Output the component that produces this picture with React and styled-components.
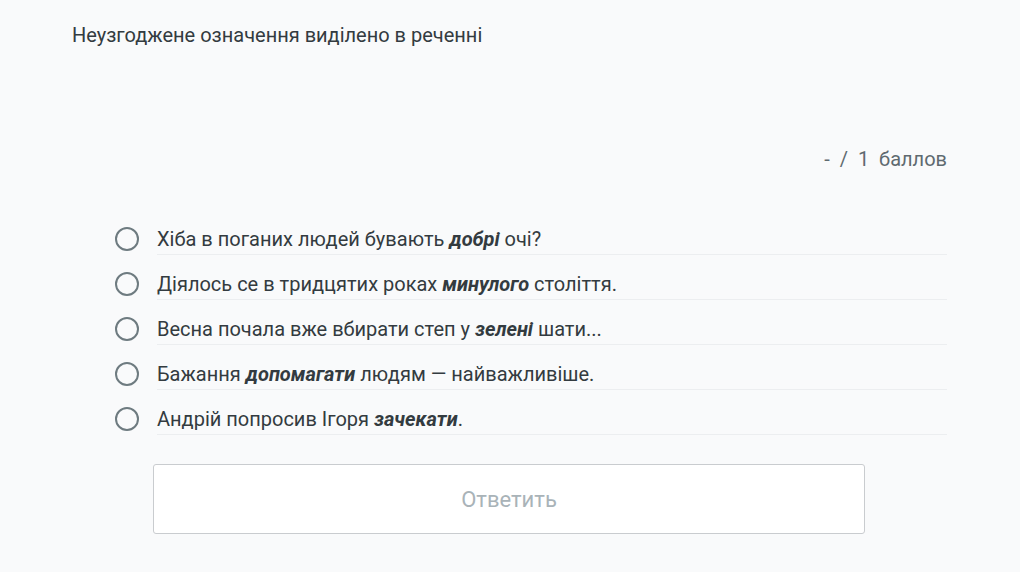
import styled, { createGlobalStyle } from "styled-components";

const Global = createGlobalStyle`
  body {
    margin: 0;
    background: #f9fafb;
    font-family: Roboto, "Noto Sans", sans-serif;
    color: #333b40;
  }
`;

const Page = styled.div`
  width: 1020px;
  height: 572px;
  padding: 23px 73px 0 72px;
  box-sizing: border-box;
`;

const Title = styled.div`
  font-size: 20px;
  line-height: 24px;
`;

const Score = styled.div`
  margin-top: 100px;
  text-align: right;
  font-size: 20px;
  line-height: 24px;
  color: #5f6a70;
  word-spacing: 5px;
`;

const Options = styled.div`
  margin-top: 39px;
  margin-left: 43px;
  display: flex;
  flex-direction: column;
`;

const Row = styled.label`
  display: flex;
  align-items: flex-start;
  height: 45px;
`;

const Radio = styled.span`
  width: 20px;
  height: 20px;
  border: 2px solid #6e7b80;
  border-radius: 50%;
  flex: none;
  margin: 17px 18px 0 0;
`;

const Text = styled.div`
  flex: 1;
  font-size: 20px;
  line-height: 24px;
  padding: 17px 0 3px;
  border-bottom: 1px solid #eceef0;
  b {
    font-weight: 700;
    font-style: italic;
  }
`;

const Button = styled.button`
  display: block;
  margin: 29px 0 0 81px;
  width: 712px;
  height: 70px;
  background: #fff;
  border: 1px solid #c9cccf;
  border-radius: 3px;
  font-family: Roboto, sans-serif;
  font-size: 22px;
  color: #a9b3b8;
`;

const options = [
  <>Хіба в поганих людей бувають <b>добрі</b> очі?</>,
  <>Діялось се в тридцятих роках <b>минулого</b> століття.</>,
  <>Весна почала вже вбирати степ у <b>зелені</b> шати...</>,
  <>Бажання <b>допомагати</b> людям — найважливіше.</>,
  <>Андрій попросив Ігоря <b>зачекати</b>.</>,
];

export default function App() {
  return (
    <Page>
      <Global />
      <Title>Неузгоджене означення виділено в реченні</Title>
      <Score>- / 1 баллов</Score>
      <Options>
        {options.map((o, i) => (
          <Row key={i}>
            <Radio />
            <Text>{o}</Text>
          </Row>
        ))}
      </Options>
      <Button>Ответить</Button>
    </Page>
  );
}
